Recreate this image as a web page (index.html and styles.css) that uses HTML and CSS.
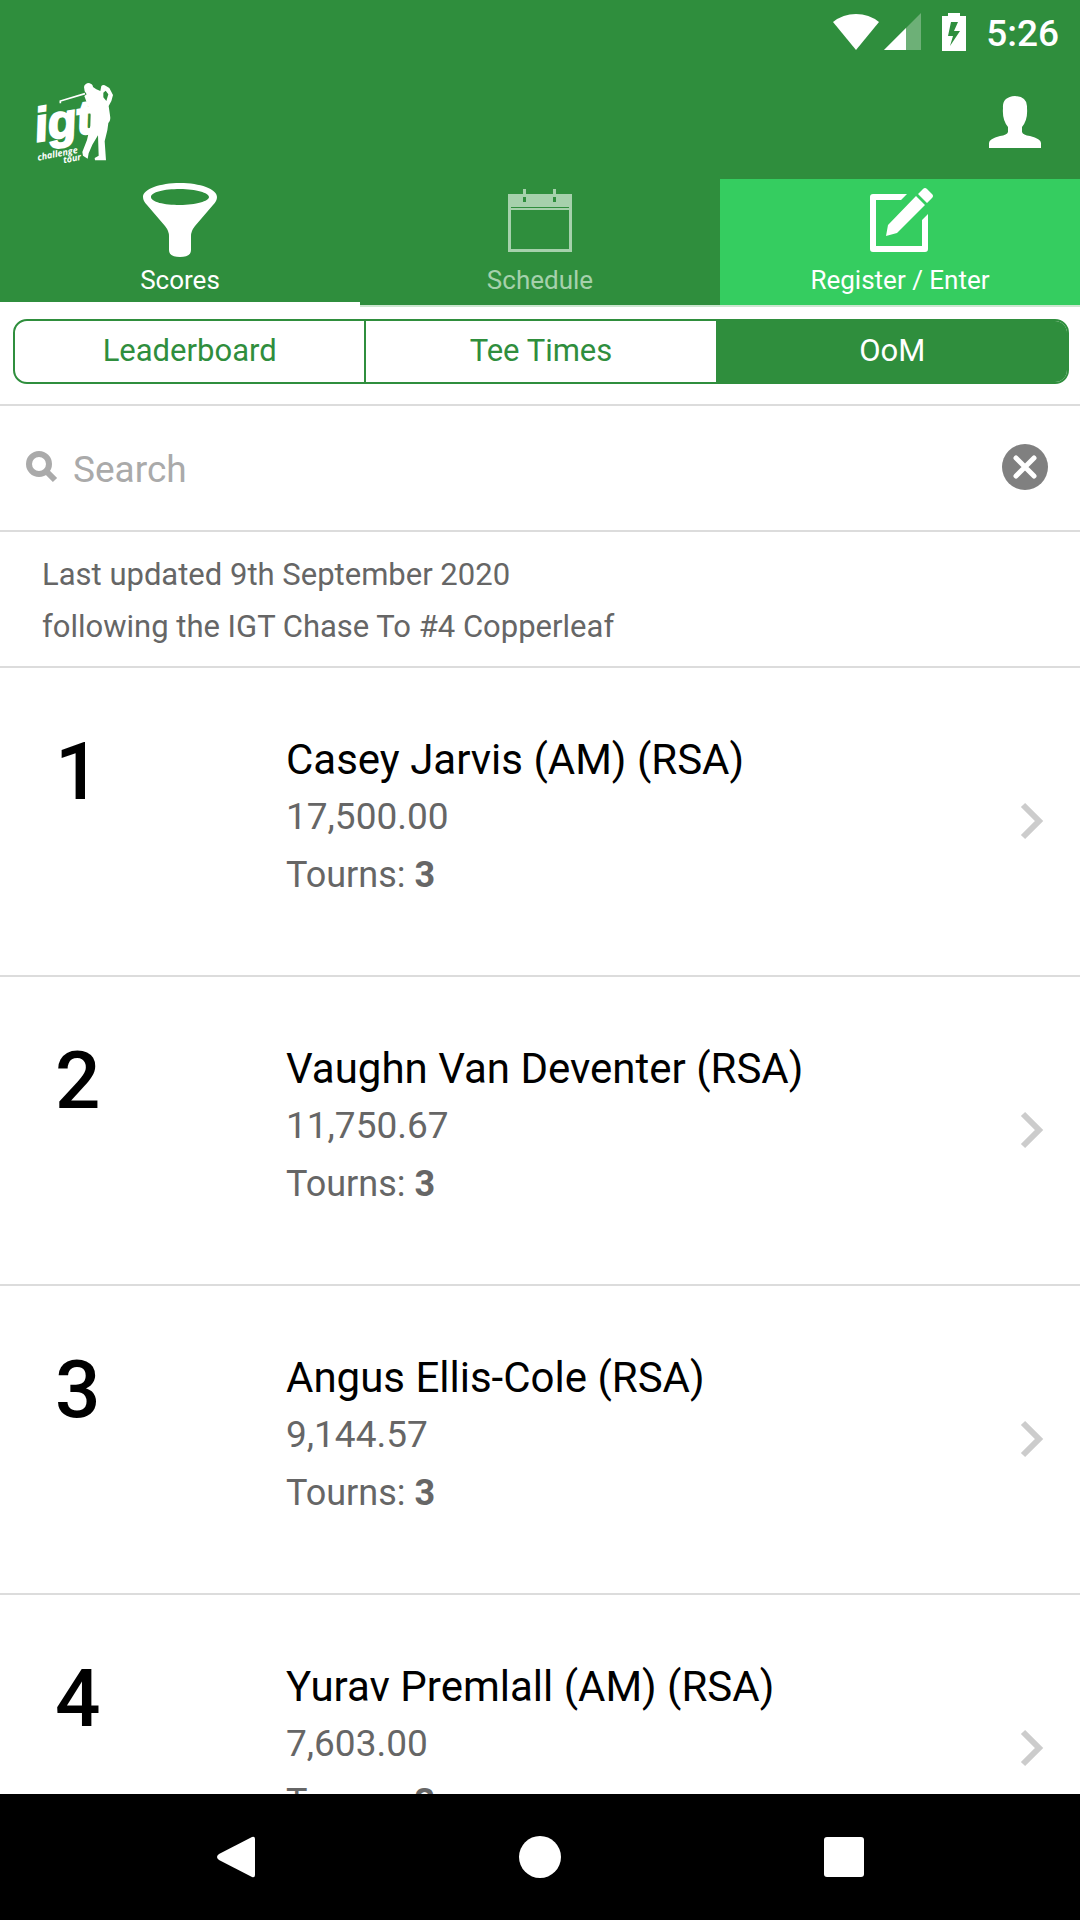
FILE: index.html
```html
<!DOCTYPE html>
<html lang="en">
<head>
    <meta charset="UTF-8">
    <meta name="viewport" content="width=device-width, initial-scale=1.0">
    <title>IGT Challenge Tour - Order of Merit</title>
    <link rel="stylesheet" href="styles.css">
</head>
<body>
    <header class="header">
        <div class="status-bar">
            <svg class="wifi" width="46" height="36" viewBox="0 0 46 36" aria-hidden="true"><path d="M0 8Q10 0 23 0T46 8L23 36Z"/></svg>
            <svg class="signal" width="37" height="37" viewBox="0 0 37 37" aria-hidden="true"><path opacity=".3" d="M37 0V37H0Z"/><path d="M22 15V37H0Z"/></svg>
            <svg class="battery" width="24" height="38" viewBox="0 0 24 38" aria-hidden="true"><path fill-rule="evenodd" d="M6 0H18V3H24V38H0V3H6ZM9 9L6 23H11L8 33L18 18H12L16 9Z"/></svg>
            <span class="time">5:26</span>
        </div>
        <div class="top-bar">
            <a class="logo" href="#" aria-label="IGT Challenge Tour">
                <svg width="110" height="100" viewBox="0 0 330 300">
                    <text class="logo-name" x="51" y="209" transform="rotate(-9 51 209)">igt</text>
                    <text class="logo-small" x="54" y="266" transform="rotate(-11 54 266)">challenge</text>
                    <text class="logo-small" x="131" y="274" transform="rotate(-11 131 274)">tour</text>
                    <path class="club" d="M121 94L121 87L195 65"/>
                    <path d="M192 45Q194 34 207 33Q219 36 219 45L229 52L241 57L244 42Q250 36 258 42L268 48L279 69Q276 88 266 102L270 130Q273 145 265 153L262 175L254 208L258 265H225L224 258L236 251L234 190L217 218L206 244L203 260L189 251L187 240L201 204L211 161L212 128L203 99L193 72L200 67L194 58ZM250 62L250 76L259 87L265 67L257 56Z"/>
                </svg>
            </a>
            <button class="user-btn" type="button" aria-label="Account">
                <svg width="52" height="52" viewBox="0 0 52 52"><path d="M26 0Q39 1 38 12Q39 24 33 31V36Q34 39 41 40Q52 43 52 47V52H0V47Q0 43 11 40Q18 39 19 36V31Q13 24 14 12Q13 1 26 0Z"/></svg>
            </button>
        </div>
        <nav class="tabs">
            <a class="tab active" href="#scores">
                <svg width="74" height="74" viewBox="0 0 74 74" aria-hidden="true"><path fill-rule="evenodd" d="M37 0C57 0 74 6 74 14Q74 18 70 22L52 43Q48 48 48 53V67Q48 74 37 74T26 67V53Q26 48 22 43L4 22Q0 18 0 14C0 6 17 0 37 0ZM37 6C21 6 8 9 8 14S21 22 37 22S66 18 66 14S53 6 37 6Z"/></svg>
                <span>Scores</span>
            </a>
            <a class="tab muted" href="#schedule">
                <svg width="74" height="74" viewBox="0 0 74 74" aria-hidden="true"><path fill-rule="evenodd" d="M5 11H20V6H23V11H50V6H53V11H69V69H5ZM8 27V66H66V27ZM20 14V19H23V14ZM50 14V19H53V14Z"/><path class="calendar-line" d="M8 24.500H66"/></svg>
                <span>Schedule</span>
            </a>
            <a class="tab register" href="#register">
                <svg width="74" height="74" viewBox="0 0 74 74" aria-hidden="true"><path d="M44 11L38 17H13V63H59V37L65 31V66Q65 69 62 69H10Q7 69 7 66V14Q7 11 10 11Z"/><path d="M53 13L62 22L34 50L23 53L25 42ZM55 11L60 6Q62 4 64 6L69 11Q71 13 69 15L64 20Z"/></svg>
                <span>Register / Enter</span>
            </a>
        </nav>
    </header>

    <main class="content">
        <div class="segments">
            <button type="button">Leaderboard</button>
            <button type="button">Tee Times</button>
            <button type="button" class="selected">OoM</button>
        </div>

        <form class="search" role="search">
            <label for="search" aria-label="Search">
                <svg width="32" height="32" viewBox="0 0 32 32"><circle cx="13" cy="13" r="10"/><path d="M20 20L29 29"/></svg>
            </label>
            <input type="text" id="search" name="search" placeholder="Search">
            <button type="reset" aria-label="Clear search">
                <svg width="46" height="46" viewBox="0 0 46 46"><circle cx="23" cy="23" r="23"/><path d="M14 14L32 32M32 14L14 32"/></svg>
            </button>
        </form>

        <p class="updated">Last updated 9th September 2020<br>following the IGT Chase To #4 Copperleaf</p>

        <div class="players">
            <a class="player" href="#player-1">
                <span class="rank">1</span>
                <div class="details">
                    <h2>Casey Jarvis (AM) (RSA)</h2>
                    <p class="amount">17,500.00</p>
                    <p>Tourns: <strong>3</strong></p>
                </div>
                <svg class="chevron" width="24" height="40" viewBox="0 0 24 40" aria-hidden="true"><path d="M3 4L19 20L3 36"/></svg>
            </a>
            <a class="player" href="#player-2">
                <span class="rank">2</span>
                <div class="details">
                    <h2>Vaughn Van Deventer (RSA)</h2>
                    <p class="amount">11,750.67</p>
                    <p>Tourns: <strong>3</strong></p>
                </div>
                <svg class="chevron" width="24" height="40" viewBox="0 0 24 40" aria-hidden="true"><path d="M3 4L19 20L3 36"/></svg>
            </a>
            <a class="player" href="#player-3">
                <span class="rank">3</span>
                <div class="details">
                    <h2>Angus Ellis-Cole (RSA)</h2>
                    <p class="amount">9,144.57</p>
                    <p>Tourns: <strong>3</strong></p>
                </div>
                <svg class="chevron" width="24" height="40" viewBox="0 0 24 40" aria-hidden="true"><path d="M3 4L19 20L3 36"/></svg>
            </a>
            <a class="player" href="#player-4">
                <span class="rank">4</span>
                <div class="details">
                    <h2>Yurav Premlall (AM) (RSA)</h2>
                    <p class="amount">7,603.00</p>
                    <p>Tourns: <strong>3</strong></p>
                </div>
                <svg class="chevron" width="24" height="40" viewBox="0 0 24 40" aria-hidden="true"><path d="M3 4L19 20L3 36"/></svg>
            </a>
        </div>
    </main>

    <footer class="nav-bar">
        <button type="button" aria-label="Back"><svg width="42" height="42" viewBox="0 0 42 42"><path d="M37 1Q40 0 40 3V39Q40 42 37 41L4 24Q0 21 4 18Z"/></svg></button>
        <button type="button" aria-label="Home"><svg width="42" height="42" viewBox="0 0 42 42"><circle cx="21" cy="21" r="21"/></svg></button>
        <button type="button" aria-label="Recent apps"><svg width="42" height="42" viewBox="0 0 42 42"><rect x="1" y="1" width="40" height="40" rx="3"/></svg></button>
    </footer>
</body>
</html>
```
FILE: styles.css
```css
* {
    box-sizing: border-box;
}

body {
    margin: 0;
    height: 100vh;
    display: flex;
    flex-direction: column;
    font-family: Roboto, 'Liberation Sans', sans-serif;
    background-color: #fff;
    overflow: hidden;
}

a {
    color: inherit;
    text-decoration: none;
}

button {
    font-family: inherit;
    margin: 0;
    padding: 0;
    border: none;
    background: none;
    cursor: pointer;
}

svg {
    display: block;
}

h2, p {
    margin: 0;
    font-weight: 400;
}

/* Header */
.header {
    flex: none;
    background-color: #2f8e3d;
    color: #fff;
}

.header svg {
    fill: currentColor;
}

.status-bar {
    display: flex;
    justify-content: flex-end;
    align-items: center;
    height: 63px;
    padding: 0 21px;
}

.signal {
    margin: 0 21px 0 5px;
}

.time {
    margin-left: 20px;
    font-size: 37px;
    font-weight: 500;
    line-height: 63px;
    padding-top: 3px;
}

.top-bar {
    display: flex;
    justify-content: space-between;
    align-items: center;
    height: 116px;
    padding: 2px 39px 0 20px;
}

.logo-name {
    font-family: 'Liberation Sans', sans-serif;
    font-size: 142px;
    font-weight: 700;
    font-style: italic;
    stroke: #fff;
    stroke-width: 6;
}

.logo-small {
    font-family: 'Open Sans', sans-serif;
    font-size: 27px;
    font-weight: 700;
    font-style: italic;
}

.header .club {
    fill: none;
    stroke: #fff;
    stroke-width: 5;
}

.user-btn {
    color: #fff;
}

.tabs {
    display: grid;
    grid-template-columns: repeat(3, 1fr);
}

.tab {
    display: flex;
    flex-direction: column;
    align-items: center;
    height: 128px;
    padding-top: 4px;
    border-bottom: 2px solid #cde6d0;
    font-size: 26px;
    line-height: 30px;
}

.tab span {
    margin-top: 8px;
}

.tab.active {
    border-bottom: 5px solid #fff;
}

.tab.muted {
    color: #a6d1ac;
}

.tab.register {
    background-color: #35cd60;
}

.calendar-line {
    stroke: #2f8e3d;
    stroke-width: 1;
}

/* Content */
.content {
    flex: 1;
    min-height: 0;
    overflow: hidden;
}

.segments {
    display: flex;
    margin: 12px 11px 20px 13px;
    border: 2px solid #2f8e3d;
    border-radius: 14px;
    background-color: #fff;
    overflow: hidden;
}

.segments button {
    flex: 1;
    height: 61px;
    padding-bottom: 2px;
    font-size: 31px;
    color: #2f8e3d;
}

.segments button + button {
    border-left: 2px solid #2f8e3d;
}

.segments .selected {
    background-color: #2f8e3d;
    color: #fff;
}

.search {
    display: flex;
    align-items: center;
    height: 128px;
    padding: 0 32px 2px 26px;
    border: solid #dcdcdc;
    border-width: 2px 0;
}

.search label svg {
    fill: none;
    stroke: #aaa;
    stroke-width: 6;
}

.search input {
    flex: 1;
    min-width: 0;
    height: 60px;
    margin: 0 15px;
    padding: 4px 0 0;
    border: none;
    outline: none;
    font-family: inherit;
    font-size: 37px;
    color: #000;
}

.search input::placeholder {
    color: #aaa;
}

.search button circle {
    fill: #808080;
}

.search button path {
    stroke: #fff;
    stroke-width: 5;
    stroke-linecap: round;
}

.updated {
    padding: 17px 42px 13px;
    border-bottom: 2px solid #dcdcdc;
    font-size: 31px;
    line-height: 52px;
    color: #666;
}

/* Player rows */
.player {
    display: grid;
    grid-template-columns: 231px 1fr auto;
    padding: 63px 36px 71px 55px;
    border-bottom: 2px solid #dcdcdc;
}

.rank {
    font-size: 80px;
    font-weight: 500;
    line-height: 82px;
    color: #000;
}

.details {
    font-size: 36px;
    line-height: 58px;
    color: #666;
}

.details h2 {
    font-size: 42px;
    line-height: 57px;
    color: #000;
}

.details .amount {
    font-size: 37px;
}

.chevron {
    margin-top: 70px;
    fill: none;
    stroke: #ccc;
    stroke-width: 6;
}

/* Android navigation */
.nav-bar {
    flex: none;
    display: grid;
    grid-template-columns: repeat(3, 1fr);
    justify-items: center;
    align-items: center;
    height: 126px;
    padding: 0 84px;
    background-color: #000;
}

.nav-bar svg {
    fill: #fff;
}
```
